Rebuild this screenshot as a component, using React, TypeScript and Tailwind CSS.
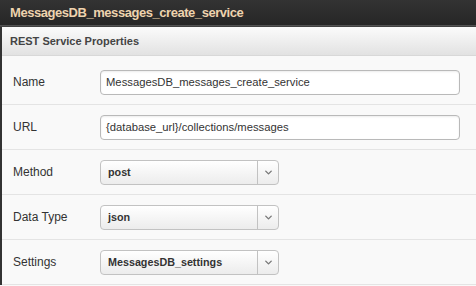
import { ChevronDown } from "lucide-react";

const font = { fontFamily: '"Liberation Sans", Arial, sans-serif' };

const Row = ({ label, children }: { label: string; children: React.ReactNode }) => (
  <div className="flex h-[45px] items-center border-b border-[#e4e4e4]">
    <div className="w-[98px] pl-[11px] text-[12px] text-[#333]">{label}</div>
    {children}
  </div>
);

const TextField = ({ value }: { value: string }) => (
  <div className="flex h-[25px] w-[360px] items-center rounded-[4px] border border-[#b9b9b9] bg-white pl-[5px] text-[11.25px] text-[#333] shadow-[inset_0_1px_2px_rgba(0,0,0,0.08)]">
    {value}
  </div>
);

const Select = ({ value }: { value: string }) => (
  <div className="flex h-[25px] w-[179px] items-center rounded-[4px] border border-[#c2c2c2] bg-gradient-to-b from-white to-[#ececec]">
    <div className="flex-1 pl-[7px] text-[10.75px] font-bold text-[#333]">{value}</div>
    <div className="flex h-full w-[21px] items-center justify-center border-l border-[#c2c2c2]">
      <ChevronDown size={11} strokeWidth={3} className="text-[#777]" />
    </div>
  </div>
);

export default function App() {
  return (
    <div className="h-[286px] w-[476px] overflow-hidden bg-[#f9f9f9]" style={font}>
      <div className="flex h-[25px] items-center bg-gradient-to-b from-[#333] to-[#262626] pl-[10px] text-[13px] font-bold tracking-[-0.45px] text-[#eed3ae]">
        MessagesDB_messages_create_service
      </div>
      <div className="h-[2px] bg-gradient-to-b from-[#5a5a5a] to-[#3a3a3a]" />
      <div className="border-l-2 border-[#333]">
        <div className="flex h-[29px] items-center border-b border-[#d8d8d8] bg-gradient-to-b from-[#fbfbfb] to-[#e2e2e2] pl-[8px] text-[11px] font-bold text-[#444]">
          REST Service Properties
        </div>
        <div className="pt-[4px]">
          <Row label="Name">
            <TextField value="MessagesDB_messages_create_service" />
          </Row>
          <Row label="URL">
            <TextField value="{database_url}/collections/messages" />
          </Row>
          <Row label="Method">
            <Select value="post" />
          </Row>
          <Row label="Data Type">
            <Select value="json" />
          </Row>
          <Row label="Settings">
            <Select value="MessagesDB_settings" />
          </Row>
        </div>
      </div>
    </div>
  );
}
